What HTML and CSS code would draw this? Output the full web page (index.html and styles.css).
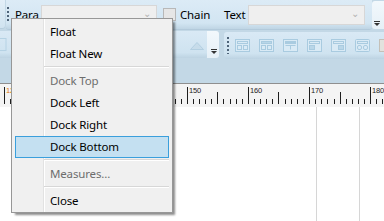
FILE: index.html
```html
<!DOCTYPE html>
<html>
<head>
<meta charset="utf-8">
<link rel="stylesheet" href="styles.css">
</head>
<body>
<div class="row1">
  <div class="stub"></div>
  <div class="tb1">
    <div class="grip"></div>
    <span class="lbl para">Para</span>
    <div class="combo c1"><span class="caret">&#8964;</span></div>
    <div class="chk"></div>
    <span class="lbl chain">Chain</span>
    <span class="lbl text">Text</span>
    <div class="combo c2"><span class="caret">&#8964;</span></div>
  </div>
  <div class="endp e1"><div class="ovf"></div></div>
</div>
<div class="row2">
  <div class="tb2l">
    <svg class="ghost" width="7" height="13" viewBox="0 0 7 13"><rect x="-1" y="0.5" width="7" height="12" fill="none" stroke="#b5d2e4"/></svg>
    <svg class="tri" width="14" height="8" viewBox="0 0 14 8"><polygon points="7,0.5 13.5,7.5 0.5,7.5" fill="#c7dcea" stroke="#b3cfe1"/></svg>
  </div>
  <div class="endp e2"><div class="ovf"></div></div>
  <div class="tb2r">
    <div class="grip g2"></div>
    <svg class="ic" width="15" height="13" viewBox="0 0 15 13"><rect x="0.5" y="0.5" width="14" height="12" fill="#d9eaf5" stroke="#a9cbe0"/><rect x="2.5" y="2.5" width="10" height="2" fill="none" stroke="#a9cbe0"/><rect x="2.5" y="6.5" width="4" height="4" fill="none" stroke="#a9cbe0"/><rect x="8.5" y="6.5" width="4" height="4" fill="none" stroke="#a9cbe0"/></svg>
    <svg class="ic" width="15" height="13" viewBox="0 0 15 13"><rect x="0.5" y="0.5" width="14" height="12" fill="#d9eaf5" stroke="#a9cbe0"/><rect x="2.5" y="2.5" width="10" height="2" fill="#b9d6e8" stroke="#a9cbe0"/><rect x="2.5" y="6.5" width="4" height="4" fill="none" stroke="#a9cbe0"/><rect x="8.5" y="6.5" width="4" height="4" fill="none" stroke="#a9cbe0"/></svg>
    <svg class="ic" width="15" height="13" viewBox="0 0 15 13"><rect x="0.5" y="0.5" width="14" height="12" fill="#d9eaf5" stroke="#a9cbe0"/><rect x="2.5" y="2.5" width="10" height="2" fill="#a9cbe0" stroke="#a9cbe0"/><path d="M2.5 6.5h10M7.5 6.5v4" fill="none" stroke="#a9cbe0"/></svg>
    <svg class="ic" width="15" height="13" viewBox="0 0 15 13"><rect x="0.5" y="0.5" width="14" height="12" fill="#d9eaf5" stroke="#a9cbe0"/><rect x="2.5" y="2.5" width="10" height="2" fill="none" stroke="#a9cbe0"/><rect x="2.5" y="6.5" width="5" height="4" fill="#b9d6e8" stroke="#a9cbe0"/></svg>
    <svg class="ic" width="15" height="13" viewBox="0 0 15 13"><rect x="0.5" y="0.5" width="14" height="12" fill="#d9eaf5" stroke="#a9cbe0"/><rect x="2.5" y="2.5" width="10" height="2" fill="none" stroke="#a9cbe0"/><rect x="7.5" y="6.5" width="5" height="4" fill="#b9d6e8" stroke="#a9cbe0"/></svg>
    <svg class="ic" width="15" height="13" viewBox="0 0 15 13"><rect x="0.5" y="0.5" width="14" height="12" rx="1" fill="#d9eaf5" stroke="#a9cbe0"/><rect x="2.5" y="2.5" width="10" height="2" fill="none" stroke="#a9cbe0"/><rect x="2.5" y="6.5" width="4" height="4" rx="1.5" fill="none" stroke="#a9cbe0"/><rect x="8.5" y="6.5" width="4" height="4" rx="1.5" fill="none" stroke="#a9cbe0"/></svg>
    <svg class="ic" width="15" height="13" viewBox="0 0 15 13"><rect x="0.5" y="0.5" width="14" height="12" fill="#e2e2de" stroke="#c4c0b8"/></svg>
  </div>
</div>
<div class="band"></div>
<svg class="ruler" width="384" height="24" viewBox="0 0 384 24">
  <rect x="0" y="0" width="384" height="24" fill="#f4f4f4"/>
  <rect x="0" y="0" width="384" height="1" fill="#8f8f8f"/>
  <g fill="#1e1e1e">
    <rect x="4" y="4" width="1" height="17"/>
    <rect x="10" y="16" width="1" height="5"/>
    <rect x="175" y="16" width="1" height="5"/>
    <rect x="181" y="16" width="1" height="5"/>
    <rect x="187" y="4" width="1" height="17"/>
    <rect x="193" y="16" width="1" height="5"/>
    <rect x="199" y="16" width="1" height="5"/>
    <rect x="205" y="16" width="1" height="5"/>
    <rect x="211" y="16" width="1" height="5"/>
    <rect x="217" y="9" width="1" height="12"/>
    <rect x="223" y="16" width="1" height="5"/>
    <rect x="230" y="16" width="1" height="5"/>
    <rect x="236" y="16" width="1" height="5"/>
    <rect x="242" y="16" width="1" height="5"/>
    <rect x="248" y="4" width="1" height="17"/>
    <rect x="254" y="16" width="1" height="5"/>
    <rect x="260" y="16" width="1" height="5"/>
    <rect x="266" y="16" width="1" height="5"/>
    <rect x="272" y="16" width="1" height="5"/>
    <rect x="278" y="9" width="1" height="12"/>
    <rect x="285" y="16" width="1" height="5"/>
    <rect x="291" y="16" width="1" height="5"/>
    <rect x="297" y="16" width="1" height="5"/>
    <rect x="303" y="16" width="1" height="5"/>
    <rect x="309" y="4" width="1" height="17"/>
    <rect x="315" y="16" width="1" height="5"/>
    <rect x="321" y="16" width="1" height="5"/>
    <rect x="327" y="16" width="1" height="5"/>
    <rect x="334" y="16" width="1" height="5"/>
    <rect x="340" y="9" width="1" height="12"/>
    <rect x="346" y="16" width="1" height="5"/>
    <rect x="352" y="16" width="1" height="5"/>
    <rect x="358" y="16" width="1" height="5"/>
    <rect x="364" y="16" width="1" height="5"/>
    <rect x="370" y="4" width="1" height="17"/>
    <rect x="376" y="16" width="1" height="5"/>
    <rect x="382" y="16" width="1" height="5"/>
  </g>
  <g class="rl" font-family="Liberation Sans, Arial, sans-serif" font-size="7.5">
    <text x="6" y="10" fill="#e07a10">120</text>
    <text x="189" y="10" fill="#1e1e1e">150</text>
    <text x="250" y="10" fill="#1e1e1e">160</text>
    <text x="311" y="10" fill="#1e1e1e">170</text>
    <text x="372" y="10" fill="#1e1e1e">180</text>
  </g>
</svg>
<div class="canvas">
  <div class="vline l1"></div>
  <div class="vline l2"></div>
</div>
<div class="menu">
  <div class="menu-col"></div>
  <div class="mi">Float</div>
  <div class="mi">Float New</div>
  <div class="sep"></div>
  <div class="mi dis">Dock Top</div>
  <div class="mi">Dock Left</div>
  <div class="mi">Dock Right</div>
  <div class="mi hot">Dock Bottom</div>
  <div class="sep"></div>
  <div class="mi dis">Measures...</div>
  <div class="sep"></div>
  <div class="mi">Close</div>
</div>
</body>
</html>
```
FILE: styles.css
```css
* { box-sizing: border-box; }
html, body { margin: 0; padding: 0; }
body {
  width: 384px;
  height: 221px;
  overflow: hidden;
  background: #c3d8e6;
  font-family: "Noto Sans", "Open Sans", sans-serif;
  font-size: 11.5px;
  letter-spacing: -0.15px;
  color: #000;
  position: relative;
}
.row1 { display: flex; height: 31px; }
.stub {
  width: 5px; height: 28px;
  background: linear-gradient(#e3eff8, #d0e3f0);
  border-radius: 0 0 3px 0;
  box-shadow: 0 1px 0 #b6cddd;
}
.tb1 {
  display: flex; align-items: center;
  width: 366px; height: 29px; margin-left: 1px;
  background: linear-gradient(#dcebf6, #d2e5f2 80%, #bfd5e4);
  border-radius: 0 0 3px 3px;
  box-shadow: 0 1px 0 #b3cadb;
  padding-left: 1px;
}
.grip {
  width: 2px; height: 15px;
  background: repeating-linear-gradient(to bottom, #4f6479 0 2px, transparent 2px 4px);
  flex: none;
}
.lbl { white-space: nowrap; line-height: 16px; flex: none; overflow: visible; }
.para { margin-left: 6px; width: 21px; }
.combo {
  position: relative;
  height: 20px;
  background: #efefef;
  border: 1px solid #d7d7d7;
  flex: none;
}
.c1 { width: 116px; margin-left: 5px; }
.c2 { width: 117px; margin-left: 3px; }
.caret {
  position: absolute; right: 5px; top: 0;
  color: #b3b3b3; font-size: 10px; line-height: 14px;
}
.chk {
  width: 13px; height: 13px; margin-left: 6px;
  background: #e6e6e6; border: 1px solid #b8b8b8; flex: none;
}
.chain { margin-left: 4px; width: 31px; }
.text { margin-left: 13px; width: 21px; }
.endp {
  position: relative;
  background: linear-gradient(#f2f8fc, #e6f0f7);
  flex: none;
}
.e1 { width: 12px; height: 28px; margin-top: 1px; border-radius: 3px 0 0 3px; }
.e2 { width: 12px; height: 27px; border-radius: 0 3px 3px 0; }
.ovf {
  position: absolute; width: 6px; height: 5px;
  border-top: 1px solid #333;
}
.ovf::after {
  content: ""; position: absolute; left: 0; top: 1px;
  border-left: 3px solid transparent; border-right: 3px solid transparent;
  border-top: 3px solid #333;
}
.e1 .ovf { left: 2px; top: 20px; }
.e2 .ovf { left: 4px; top: 18px; }
.row2 { display: flex; height: 28px; }
.tb2l {
  position: relative;
  width: 209px; height: 27px;
  background: linear-gradient(#d9e9f5, #cfe3f0 80%, #bdd3e2);
  border-radius: 0 0 3px 0;
}
.ghost { position: absolute; left: 0; top: 7px; }
.tri { position: absolute; left: 190px; top: 11px; }
.tb2r {
  display: flex; align-items: center;
  margin-left: 5px; width: 160px; height: 27px; margin-top: 1px;
  background: linear-gradient(#d9e9f5, #cfe3f0 80%, #bdd3e2);
  border-radius: 3px 0 0 3px;
  padding-left: 3px;
}
.g2 { height: 17px; margin-right: 6px; }
.ic { flex: none; margin-right: 9px; }
.band { height: 24px; }
.ruler { display: block; }
.canvas { position: relative; height: 114px; background: #fff; }
.vline { position: absolute; top: 0; bottom: 0; width: 1px; background: #d6d6d6; }
.l1 { left: 316px; }
.l2 { left: 359px; }
.menu {
  position: absolute; left: 11px; top: 18px;
  width: 162px; height: 195px;
  background: #f0f0f0;
  border: 1px solid #979797;
  padding: 2px 3px 1px;
  box-shadow: 3px 3px 2px -1px rgba(0,0,0,0.45);
}
.menu-col {
  position: absolute; left: 31px; top: 0; bottom: 0; width: 1px;
  background: #e2e2e2; box-shadow: 1px 0 0 #fff;
}
.mi {
  position: relative;
  height: 22px; line-height: 20px;
  padding-left: 34px;
  border: 1px solid transparent;
  white-space: nowrap;
}
.mi.dis { color: #6d6d6d; }
.mi.hot { background: #c4e0f1; border-color: #3a9fdc; }
.sep {
  position: relative;
  height: 5px; margin-left: 29px;
  background: linear-gradient(to bottom, transparent 1px, #d7d7d7 1px 2px, #fff 2px 3px, transparent 3px);
}
```
